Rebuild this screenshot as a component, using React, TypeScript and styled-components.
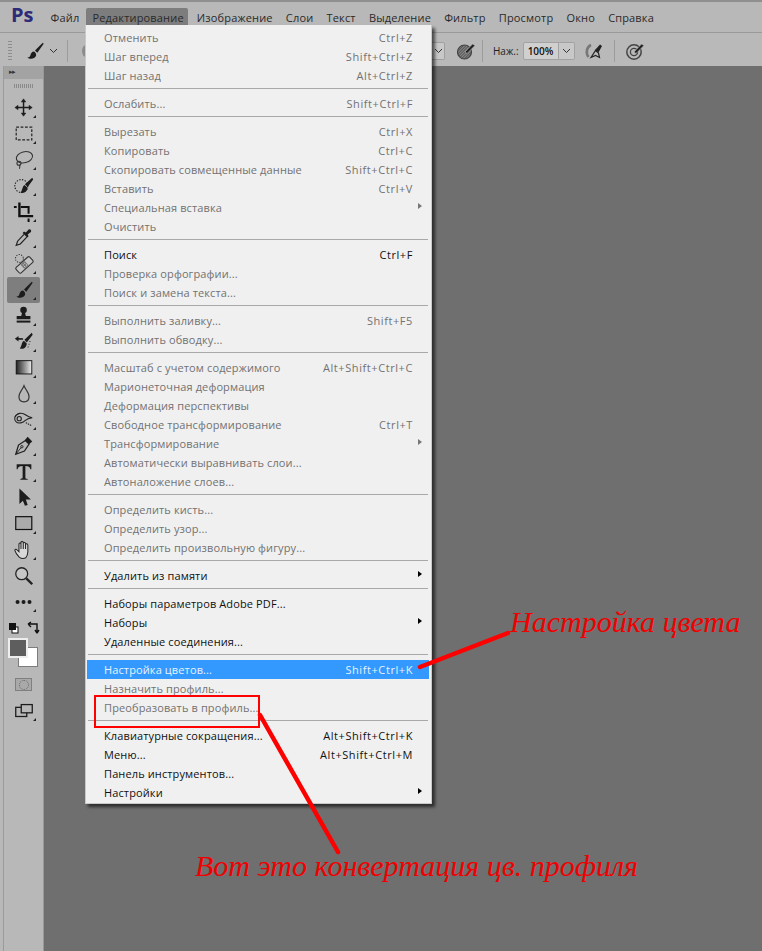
import React from "react";
import styled, { createGlobalStyle } from "styled-components";

const Global = createGlobalStyle`
  html, body { margin: 0; padding: 0; background: #6f6f6f; }
  body { width: 762px; height: 951px; overflow: hidden; font-family: "Open Sans", "Noto Sans", sans-serif; }
  #root { width: 762px; height: 951px; }
`;

const Page = styled.div`
  position: relative;
  width: 762px;
  height: 951px;
  display: flex;
  flex-direction: column;
  background: #6f6f6f;
  overflow: hidden;
`;

const MenuBar = styled.div`
  height: 32px;
  box-sizing: border-box;
  border-top: 2px solid #8f8f8f;
  background: #b8b8b8;
  display: flex;
  align-items: flex-start;
  padding-left: 11px;
`;
const Logo = styled.div`
  width: 33px;
  height: 26px;
  display: flex;
  align-items: center;
  color: #2e2a78;
  font: 700 20px/1 "Open Sans", sans-serif;
  box-sizing: border-box;
  flex: none;
`;
const TopItem = styled.div<{ $active?: boolean }>`
  display: flex;
  align-items: center;
  height: 19px;
  margin-top: 6px;
  margin-right: ${(p) => (p.$active ? "2.5px" : "0")};
  padding: ${(p) => (p.$active ? "0 4px 0 6.5px" : "0 6.6px")};
  border-radius: 2px 2px 0 0;
  font-size: 11px;
  color: #2a2a2a;
  white-space: nowrap;
  background: ${(p) => (p.$active ? "#7d7d7d" : "transparent")};
  letter-spacing: 0.16px;
`;

const OptionsBar = styled.div`
  height: 34px;
  box-sizing: border-box;
  border-top: 1px solid #9a9a9a;
  background: #b9b9b9;
  display: flex;
  align-items: center;
  padding: 2px 0 0 8px;
`;
const Grip = styled.div`
  width: 4px;
  height: 20px;
  margin-right: 12px;
  background: repeating-linear-gradient(to bottom, #8d8d8d 0 1px, transparent 1px 3px);
`;
const Chevron = styled.svg`
  width: 9px;
  height: 6px;
  flex: none;
`;
const Spacer = styled.span`
  width: 3px;
  flex: none;
`;
const VDivider = styled.div<{ $left: number; $right: number }>`
  width: 1px;
  height: 22px;
  background: #9c9c9c;
  margin: 0 ${(p) => p.$right}px 0 ${(p) => p.$left}px;
  flex: none;
`;
const GreyDot = styled.div`
  width: 8px;
  height: 12px;
  border-radius: 50%;
  background: #8c8c8c;
  margin-right: 342px;
  flex: none;
`;
const Stepper = styled.div`
  width: 13px;
  height: 18px;
  box-sizing: border-box;
  border: 1px solid #9f9f9f;
  border-left: none;
  border-radius: 0 2px 2px 0;
  background: #c8c8c8;
  display: flex;
  align-items: center;
  justify-content: center;
  margin-right: 11px;
  flex: none;
`;
const PressLabel = styled.span`
  font-size: 10px;
  color: #222;
  margin-right: 4px;
  white-space: nowrap;
`;
const ValueBox = styled.div`
  width: 36px;
  height: 18px;
  box-sizing: border-box;
  border: 1px solid #a2a2a2;
  border-radius: 2px 0 0 2px;
  background: #d0d0d0;
  font-size: 10px;
  font-weight: 600;
  line-height: 16px;
  text-align: center;
  color: #111;
  flex: none;
`;
const ComboBtn = styled.div`
  width: 16px;
  height: 18px;
  box-sizing: border-box;
  border: 1px solid #a2a2a2;
  border-left: none;
  border-radius: 0 2px 2px 0;
  background: #c8c8c8;
  display: flex;
  align-items: center;
  justify-content: center;
  margin-right: 9px;
  flex: none;
`;
const OptIcon = styled.svg`
  width: 20px;
  height: 20px;
  flex: none;
`;

const Workspace = styled.div`
  flex: 1;
  display: flex;
  min-height: 0;
`;
const EdgeStrip = styled.div`
  width: 4px;
  background: #b8b8b8;
  border-right: 1px solid #9b9b9b;
  box-sizing: border-box;
`;
const ToolColumn = styled.div`
  width: 40px;
  background: #b8b8b8;
  border-right: 1px solid #989898;
  box-sizing: border-box;
  display: flex;
  flex-direction: column;
  align-items: center;
`;
const ToolHead = styled.div`
  width: 100%;
  height: 13px;
  background: #a3a3a3;
  color: #333;
  font-size: 7px;
  line-height: 12px;
  padding-left: 5px;
  box-sizing: border-box;
  letter-spacing: -1px;
`;
const ToolGrip = styled.div`
  width: 20px;
  height: 4px;
  margin: 5px 0 7px;
  flex: none;
  background: repeating-linear-gradient(to right, #8a8a8a 0 1px, transparent 1px 2px);
`;
const Tool = styled.div<{ $active?: boolean }>`
  position: relative;
  width: 33px;
  height: 26px;
  box-sizing: border-box;
  display: flex;
  align-items: center;
  justify-content: center;
  border-radius: 2px;
  background: ${(p) => (p.$active ? "#7e7e7e" : "transparent")};
  flex: none;
`;
const Corner = styled.span`
  position: absolute;
  right: 4px;
  bottom: 3px;
  width: 0;
  height: 0;
  border-left: 3px solid transparent;
  border-bottom: 3px solid #222;
`;
const ToolSvg = styled.svg`
  width: 22px;
  height: 22px;
`;
const ColorBlock = styled.div`
  position: relative;
  width: 33px;
  height: 57px;
  flex: none;
`;
const MiniSwatches = styled.svg`
  position: absolute;
  left: 1px;
  top: 6px;
  width: 32px;
  height: 14px;
`;
const BgSwatch = styled.div`
  position: absolute;
  left: 11px;
  top: 32px;
  width: 20px;
  height: 20px;
  box-sizing: border-box;
  background: #fff;
  border: 1px solid #7d7d7d;
`;
const FgSwatch = styled.div`
  position: absolute;
  left: 1px;
  top: 23px;
  width: 20px;
  height: 20px;
  box-sizing: border-box;
  background: #5e5e5e;
  border: 2px solid #eee;
`;
const MaskBtn = styled.div`
  width: 17px;
  height: 13px;
  margin-top: 6px;
  box-sizing: border-box;
  border: 1px solid #7f7f7f;
  background: #a9a9a9;
  display: flex;
  align-items: center;
  justify-content: center;
  flex: none;
`;
const MaskDot = styled.div`
  width: 8px;
  height: 8px;
  border: 1px dotted #666;
  border-radius: 50%;
`;
const ScreenBtn = styled(Tool)`
  margin-top: 7px;
`;
const Canvas = styled.div`
  flex: 1;
  background: #6f6f6f;
`;

const Dropdown = styled.div`
  position: absolute;
  left: 85px;
  top: 25px;
  width: 347px;
  height: 779px;
  box-sizing: border-box;
  padding: 3px 2px 0 1px;
  background: #f0f0f0;
  border: 1px solid #c9c9c9;
  border-top: none;
  box-shadow: 3px 3px 3px rgba(0, 0, 0, 0.6);
`;
const Row = styled.div<{ $tone: "on" | "off" | "hi" }>`
  height: 19px;
  display: flex;
  align-items: center;
  box-sizing: border-box;
  padding: 0 16px 0 17px;
  font-size: 11px;
  letter-spacing: 0.12px;
  white-space: nowrap;
  position: relative;
  color: ${(p) => (p.$tone === "on" ? "#111" : p.$tone === "hi" ? "#e8f2ff" : "#727272")};
  background: ${(p) => (p.$tone === "hi" ? "#3399ff" : "transparent")};
`;
const RowLabel = styled.span`
  flex: 1;
`;
const Shortcut = styled.span`
  letter-spacing: 0.58px;
`;
const SubArrow = styled.span<{ $on: boolean }>`
  position: absolute;
  right: 7px;
  top: 5px;
  width: 0;
  height: 0;
  border-top: 3.5px solid transparent;
  border-bottom: 3.5px solid transparent;
  border-left: 4.5px solid ${(p) => (p.$on ? "#000" : "#777")};
`;
const Sep = styled.div`
  height: 1px;
  margin: 3px 1px 5px;
  background: #a8a8a8;
`;

const Arrows = styled.svg`
  position: absolute;
  left: 0;
  top: 0;
  width: 762px;
  height: 951px;
  pointer-events: none;
`;
const RedBox = styled.div`
  position: absolute;
  left: 94px;
  top: 695px;
  width: 166px;
  height: 33px;
  box-sizing: border-box;
  border: 2px solid #f00;
`;
const Note = styled.div<{ $x: number; $y: number }>`
  position: absolute;
  left: ${(p) => p.$x}px;
  top: ${(p) => p.$y}px;
  color: #f00000;
  font: italic 400 30px/36px "Liberation Serif", serif;
  white-space: nowrap;
`;

type Item =
  | { sep: true }
  | { t: string; k?: string; on?: boolean; hi?: boolean; sub?: boolean };

const S: Item = { sep: true };
const menu: Item[] = [
  { t: "Отменить", k: "Ctrl+Z" },
  { t: "Шаг вперед", k: "Shift+Ctrl+Z" },
  { t: "Шаг назад", k: "Alt+Ctrl+Z" },
  S,
  { t: "Ослабить...", k: "Shift+Ctrl+F" },
  S,
  { t: "Вырезать", k: "Ctrl+X" },
  { t: "Копировать", k: "Ctrl+C" },
  { t: "Скопировать совмещенные данные", k: "Shift+Ctrl+C" },
  { t: "Вставить", k: "Ctrl+V" },
  { t: "Специальная вставка", sub: true },
  { t: "Очистить" },
  S,
  { t: "Поиск", k: "Ctrl+F", on: true },
  { t: "Проверка орфографии..." },
  { t: "Поиск и замена текста..." },
  S,
  { t: "Выполнить заливку...", k: "Shift+F5" },
  { t: "Выполнить обводку..." },
  S,
  { t: "Масштаб с учетом содержимого", k: "Alt+Shift+Ctrl+C" },
  { t: "Марионеточная деформация" },
  { t: "Деформация перспективы" },
  { t: "Свободное трансформирование", k: "Ctrl+T" },
  { t: "Трансформирование", sub: true },
  { t: "Автоматически выравнивать слои..." },
  { t: "Автоналожение слоев..." },
  S,
  { t: "Определить кисть..." },
  { t: "Определить узор..." },
  { t: "Определить произвольную фигуру..." },
  S,
  { t: "Удалить из памяти", on: true, sub: true },
  S,
  { t: "Наборы параметров Adobe PDF...", on: true },
  { t: "Наборы", on: true, sub: true },
  { t: "Удаленные соединения...", on: true },
  S,
  { t: "Настройка цветов...", k: "Shift+Ctrl+K", hi: true },
  { t: "Назначить профиль..." },
  { t: "Преобразовать в профиль..." },
  S,
  { t: "Клавиатурные сокращения...", k: "Alt+Shift+Ctrl+K", on: true },
  { t: "Меню...", k: "Alt+Shift+Ctrl+M", on: true },
  { t: "Панель инструментов...", on: true },
  { t: "Настройки", on: true, sub: true },
];

const top = ["Изображение", "Слои", "Текст", "Выделение", "Фильтр", "Просмотр", "Окно", "Справка"];

const BrushGlyph = (
  <g fill="#1c1c1c">
    <path d="M20.5 3 L12 11.5 L14.5 14 L21.5 4 Z" />
    <path d="M11 12.5 C8.5 12.5 7.5 14.5 7 16.5 C6.5 18.5 5 19 3.5 19 C6 21 11.5 21 13 17.5 C13.8 15.8 13 14 11 12.5 Z" />
  </g>
);

const tools: { c: React.ReactNode; corner?: boolean; active?: boolean }[] = [
  {
    corner: true,
    c: (
      <g fill="#1c1c1c" stroke="#1c1c1c">
        <path d="M11.5 4 V19 M4 11.5 H19" strokeWidth="1.6" fill="none" />
        <path d="M11.5 2 L14 5.5 H9 Z M11.5 21 L14 17.5 H9 Z M2 11.5 L5.5 9 V14 Z M21 11.5 L17.5 9 V14 Z" strokeWidth="0.5" />
      </g>
    ),
  },
  {
    corner: true,
    c: <rect x="3.5" y="4.5" width="17" height="14" fill="none" stroke="#222" strokeWidth="1.3" strokeDasharray="3 1.8" />,
  },
  {
    corner: true,
    c: (
      <g fill="none" stroke="#333" strokeWidth="1.2">
        <ellipse cx="12.5" cy="9" rx="9" ry="6" transform="rotate(-14 12.5 9)" />
        <circle cx="6.5" cy="15.5" r="2.2" />
        <path d="M7 17.5 C7.5 19 8 20 7 21.5" />
      </g>
    ),
  },
  {
    corner: true,
    c: (
      <g>
        <circle cx="9" cy="12" r="7" fill="none" stroke="#222" strokeWidth="1.3" strokeDasharray="1.4 1.6" />
        <path d="M21 3 L13 10 L16 13 L22 5 Z M12.5 11 C10.5 12 10.5 15 9.5 17 C9 18.5 8.5 19 8 19 C11 20.5 15.5 19 16 14 Z" fill="#1c1c1c" />
      </g>
    ),
  },
  {
    corner: true,
    c: (
      <g fill="none" stroke="#111">
        <path d="M7 1.5 V16.5 H22" strokeWidth="2.6" />
        <path d="M1 6.5 H4 M8.5 6.5 H17 V14 M17 19 V23" strokeWidth="2.2" />
      </g>
    ),
  },
  {
    corner: true,
    c: (
      <g>
        <path d="M12 8 L5 15.5 L3.5 20 L8 18.5 L15 11" fill="none" stroke="#222" strokeWidth="1.3" />
        <path d="M10.5 6.5 L15.5 11.5 L17 10 L16 8.3 L19.5 5.5 C20.8 3.8 18.5 1.5 16.8 3 L14 6 L12 5 Z" fill="#1c1c1c" />
      </g>
    ),
  },
  {
    corner: true,
    c: (
      <g>
        <circle cx="7" cy="6" r="4.3" fill="none" stroke="#222" strokeWidth="1.1" strokeDasharray="1.2 1.5" />
        <g transform="rotate(-42 12.5 13)">
          <rect x="2.5" y="9" width="20" height="8" rx="1.5" fill="#c4c4c4" stroke="#333" strokeWidth="1.2" />
          <rect x="9.5" y="10" width="6" height="6" fill="#777" />
          <path d="M11 11.5h1v1h-1z M13.5 11.5h1v1h-1z M11 14h1v1h-1z M13.5 14h1v1h-1z" fill="#eee" />
        </g>
      </g>
    ),
  },
  { corner: true, active: true, c: BrushGlyph },
  {
    corner: true,
    c: (
      <g fill="#1c1c1c">
        <circle cx="11.5" cy="5.5" r="3.6" />
        <path d="M10 8 H13 L14 12 H19 V15.5 H4 V12 H9 Z" />
        <rect x="4" y="17" width="15" height="2.2" />
      </g>
    ),
  },
  {
    corner: true,
    c: (
      <g fill="#1c1c1c">
        <path d="M20.5 2 L12.5 9.5 L15 12.5 L21.5 4 Z M12 10.5 C9.5 11.5 10 15 7.5 19 C11.5 20.5 15 17.5 15 13.5 Z" />
        <path d="M2 8.5 L6 5.5 V7.5 L11 8 V9.5 H6 V11.5 Z" />
        <path d="M18 11h1v1h-1z M17 14h1v1h-1z M16 17h1v1h-1z" />
      </g>
    ),
  },
  {
    c: (
      <g>
        <defs>
          <linearGradient id="g1" x1="0" x2="1">
            <stop offset="0" stopColor="#222" />
            <stop offset="1" stopColor="#eee" />
          </linearGradient>
        </defs>
        <rect x="3.5" y="4" width="17" height="14.5" fill="url(#g1)" stroke="#111" strokeWidth="1" />
      </g>
    ),
    corner: true,
  },
  {
    corner: true,
    c: <path d="M12 3 C10.5 7 6.5 10.5 6.5 15 C6.5 18.5 9 20.5 12 20.5 C15 20.5 17.5 18.5 17.5 15 C17.5 10.5 13.5 7 12 3 Z" fill="none" stroke="#333" strokeWidth="1.3" />,
  },
  {
    corner: true,
    c: (
      <g fill="none" stroke="#222" strokeWidth="1.2">
        <path d="M2 9 C4 4 10 3.5 14 6.5 C16 8 18 9 21 9.5 C17.5 10 15.5 10.5 13.5 12.5 C11 15 6 16.5 3.5 14 C2 12.5 1.5 11 2 9 Z" />
        <circle cx="6.8" cy="10.5" r="2.3" />
        <path d="M14 15 L20 18" strokeDasharray="1.5 1" />
      </g>
    ),
  },
  {
    corner: true,
    c: (
      <g>
        <path d="M13.5 6 L6 11 L3 21 L12.5 17.5 L17.5 10 Z" fill="none" stroke="#222" strokeWidth="1.4" />
        <path d="M3.5 20.5 L9 13.5" stroke="#222" strokeWidth="1" />
        <circle cx="9.7" cy="12.8" r="1.3" fill="none" stroke="#222" />
        <path d="M13 5.5 L16 2 L21 7 L17.5 10 Z" fill="#1c1c1c" />
      </g>
    ),
  },
  {
    corner: true,
    c: <path d="M4 3.5 H20 V9 H19 C18.5 6.5 17 5.5 13.5 5.5 V18 C13.5 19.3 14.5 19.5 16 19.5 V20.5 H8 V19.5 C9.5 19.5 10.5 19.3 10.5 18 V5.5 C7 5.5 5.5 6.5 5 9 H4 Z" fill="#1c1c1c" />,
  },
  {
    corner: true,
    c: <path d="M7 1.5 L19.5 13.5 H14 L16 19.5 L13 20.5 L10.8 15 L7 18.5 Z" fill="#1c1c1c" />,
  },
  {
    corner: true,
    c: <rect x="3" y="4" width="17.5" height="14" fill="#ababab" stroke="#111" strokeWidth="1.3" />,
  },
  {
    corner: true,
    c: (
      <path
        d="M7 20 C5 18 2.5 14.5 2 12.5 C2 11 3.5 11 4.5 12 L6.5 14 V5.5 C6.5 4 8.5 4 8.7 5.5 V3.8 C8.8 2.5 11 2.5 11.2 3.8 V4.5 C11.5 3.3 13.6 3.5 13.7 5 V6 C14 5 16 5 16.2 6.5 V14 C16.2 17 15 19 14 20.5 C12 21.5 9 21.5 7 20 Z M8.7 5.5 V11 M11.2 4.5 V11 M13.7 5.5 V11"
        fill="#d8d8d8"
        stroke="#222"
        strokeWidth="1.1"
      />
    ),
  },
  {
    c: (
      <g fill="none" stroke="#222">
        <circle cx="9.5" cy="9.5" r="6.5" strokeWidth="1.4" fill="#c6c6c6" />
        <path d="M14.5 14.5 L21 21" strokeWidth="2.6" />
      </g>
    ),
  },
  {
    corner: true,
    c: (
      <g fill="#1c1c1c">
        <circle cx="5" cy="12" r="2.2" />
        <circle cx="11.5" cy="12" r="2.2" />
        <circle cx="18" cy="12" r="2.2" />
      </g>
    ),
  },
];

const Chev = () => (
  <Chevron viewBox="0 0 9 6">
    <path d="M1 1 L4.5 4.5 L8 1" fill="none" stroke="#333" strokeWidth="1" />
  </Chevron>
);

const HatchTarget = () => (
  <OptIcon viewBox="0 0 20 20">
    <defs>
      <pattern id="hatch" width="2" height="2" patternUnits="userSpaceOnUse" patternTransform="rotate(45)">
        <rect width="2" height="2" fill="#8a8a8a" />
        <rect width="1" height="2" fill="#555" />
      </pattern>
    </defs>
    <circle cx="8.5" cy="11" r="7" fill="url(#hatch)" stroke="#444" strokeWidth="1.2" />
    <path d="M9 11 L16.5 3 L19 4.5 L11 12.5 Z" fill="#222" stroke="#b9b9b9" strokeWidth="0.6" />
  </OptIcon>
);

const RingTarget = () => (
  <OptIcon viewBox="0 0 20 20">
    <circle cx="9" cy="11" r="7.2" fill="none" stroke="#444" strokeWidth="1.5" />
    <circle cx="9" cy="11" r="3.6" fill="none" stroke="#444" strokeWidth="1.3" />
    <path d="M9 11 L16.5 3 L19 4.5 L11 12.5 Z" fill="#222" stroke="#b9b9b9" strokeWidth="0.6" />
  </OptIcon>
);

const Airbrush = () => (
  <OptIcon viewBox="0 0 20 20">
    <path d="M7 4 C2.5 6 1.5 12 4.5 16" fill="none" stroke="#777" strokeWidth="2.6" />
    <path d="M7 16.5 L11.5 9.5 L14.5 12 L15.5 16.5 L11.5 14.5 Z" fill="#b9b9b9" stroke="#222" strokeWidth="1.2" />
    <path d="M11 9 L16 3.5 L18 5 L14.5 11.5 Z" fill="#222" />
  </OptIcon>
);

export default function App() {
  return (
    <Page>
      <Global />
      <MenuBar>
        <Logo>Ps</Logo>
        <TopItem>Файл</TopItem>
        <TopItem $active>Редактирование</TopItem>
        {top.map((t) => (
          <TopItem key={t}>{t}</TopItem>
        ))}
      </MenuBar>
      <OptionsBar>
        <Grip />
        <ToolSvg viewBox="0 0 24 24">{BrushGlyph}</ToolSvg>
        <Spacer />
        <Chev />
        <VDivider $left={9} $right={14} />
        <GreyDot />
        <Stepper>
          <Chev />
        </Stepper>
        <HatchTarget />
        <VDivider $left={6} $right={10} />
        <PressLabel>Наж.:</PressLabel>
        <ValueBox>100%</ValueBox>
        <ComboBtn>
          <Chev />
        </ComboBtn>
        <Airbrush />
        <VDivider $left={10} $right={10} />
        <RingTarget />
      </OptionsBar>
      <Workspace>
        <EdgeStrip />
        <ToolColumn>
          <ToolHead>▸▸</ToolHead>
          <ToolGrip />
          {tools.map((t, i) => (
            <Tool key={i} $active={t.active}>
              <ToolSvg viewBox="0 0 24 24">{t.c}</ToolSvg>
              {t.corner && <Corner />}
            </Tool>
          ))}
          <ColorBlock>
            <MiniSwatches viewBox="0 0 32 14">
              <rect x="4" y="6" width="6" height="6" fill="#fff" stroke="#111" />
              <rect x="1" y="2" width="7" height="7" fill="#111" />
              <path d="M20 3 H29 V11 M20 3 L23 1 M20 3 L23 6 M29 12 L27 9 M29 12 L31 9" fill="none" stroke="#111" strokeWidth="1.4" />
            </MiniSwatches>
            <BgSwatch />
            <FgSwatch />
          </ColorBlock>
          <MaskBtn>
            <MaskDot />
          </MaskBtn>
          <ScreenBtn>
            <ToolSvg viewBox="0 0 24 24">
              <rect x="3" y="8" width="12" height="10" fill="none" stroke="#1c1c1c" strokeWidth="1.4" />
              <rect x="9" y="5" width="12" height="9" fill="#b8b8b8" stroke="#1c1c1c" strokeWidth="1.4" />
            </ToolSvg>
            <Corner />
          </ScreenBtn>
        </ToolColumn>
        <Canvas />
      </Workspace>

      <Dropdown>
        {menu.map((m, i) =>
          "sep" in m ? (
            <Sep key={i} />
          ) : (
            <Row key={i} $tone={m.hi ? "hi" : m.on ? "on" : "off"}>
              <RowLabel>{m.t}</RowLabel>
              {m.k && <Shortcut>{m.k}</Shortcut>}
              {m.sub && <SubArrow $on={!!m.on} />}
            </Row>
          )
        )}
      </Dropdown>

      <RedBox />
      <Arrows viewBox="0 0 762 951">
        <path d="M420 667 L508 633" stroke="#f00" strokeWidth="4.5" strokeLinecap="round" fill="none" />
        <path d="M260 715 L338 852" stroke="#f00" strokeWidth="4.5" strokeLinecap="round" fill="none" />
      </Arrows>
      <Note $x={510} $y={604}>Настройка цвета</Note>
      <Note $x={195} $y={848}>Вот это конвертация цв. профиля</Note>
    </Page>
  );
}
